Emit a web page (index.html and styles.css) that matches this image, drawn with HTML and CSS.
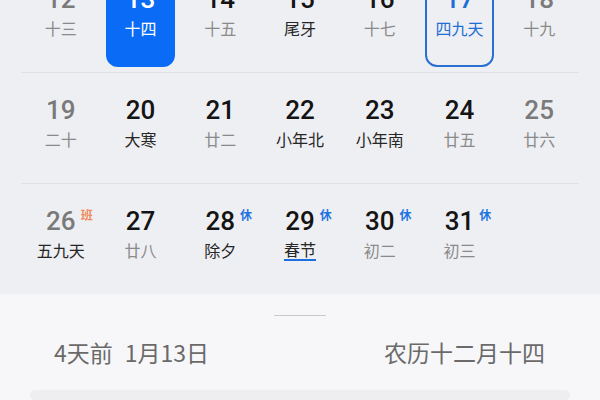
FILE: index.html
```html
<!DOCTYPE html>
<html lang="zh">
<head>
<meta charset="utf-8">
<link rel="stylesheet" href="styles.css">
</head>
<body>
<div class="cal">
  <div class="row">
    <div class="cell"><span class="num muted">12</span><span class="lunar">十三</span></div>
    <div class="cell selected"><span class="num">13</span><span class="lunar">十四</span></div>
    <div class="cell"><span class="num">14</span><span class="lunar">十五</span></div>
    <div class="cell"><span class="num">15</span><span class="lunar dark">尾牙</span></div>
    <div class="cell"><span class="num">16</span><span class="lunar">十七</span></div>
    <div class="cell today"><span class="num">17</span><span class="lunar">四九天</span></div>
    <div class="cell"><span class="num muted">18</span><span class="lunar">十九</span></div>
  </div>
  <div class="row">
    <div class="cell"><span class="num muted">19</span><span class="lunar">二十</span></div>
    <div class="cell"><span class="num">20</span><span class="lunar dark">大寒</span></div>
    <div class="cell"><span class="num">21</span><span class="lunar">廿二</span></div>
    <div class="cell"><span class="num">22</span><span class="lunar dark">小年北</span></div>
    <div class="cell"><span class="num">23</span><span class="lunar dark">小年南</span></div>
    <div class="cell"><span class="num">24</span><span class="lunar">廿五</span></div>
    <div class="cell"><span class="num muted">25</span><span class="lunar">廿六</span></div>
  </div>
  <div class="row last">
    <div class="cell"><span class="num muted">26<span class="badge work">班</span></span><span class="lunar dark">五九天</span></div>
    <div class="cell"><span class="num">27</span><span class="lunar">廿八</span></div>
    <div class="cell"><span class="num">28<span class="badge rest">休</span></span><span class="lunar dark">除夕</span></div>
    <div class="cell"><span class="num">29<span class="badge rest">休</span></span><span class="lunar dark festival">春节</span></div>
    <div class="cell"><span class="num">30<span class="badge rest">休</span></span><span class="lunar">初二</span></div>
    <div class="cell"><span class="num">31<span class="badge rest">休</span></span><span class="lunar">初三</span></div>
    <div class="cell"></div>
  </div>
</div>
<div class="panel">
  <div class="handle"></div>
  <div class="info">
    <div class="when"><span>4天前</span><span>1月13日</span></div>
    <div class="lunar-date">农历十二月十四</div>
  </div>
  <div class="card"></div>
</div>
</body>
</html>
```

FILE: styles.css
```css
* { box-sizing: border-box; }
html, body {
  margin: 0;
  padding: 0;
  width: 600px;
  height: 400px;
  overflow: hidden;
  background: #eeeff3;
  font-family: "Noto Sans CJK SC", "Noto Sans", sans-serif;
}
.cal {
  margin-top: -38px;
  padding: 0 21px;
}
.row {
  display: grid;
  grid-template-columns: repeat(7, 1fr);
  height: 111px;
  border-bottom: 1px solid #e1e1e5;
}
.row.last {
  border-bottom: none;
  height: 110px;
}
.cell {
  margin: 5px;
  height: 100px;
  padding-top: 17px;
  display: flex;
  flex-direction: column;
  align-items: center;
  border-radius: 12px;
}
.num {
  position: relative;
  font-family: Roboto, "Noto Sans CJK SC", sans-serif;
  font-weight: 500;
  font-size: 26px;
  line-height: 30px;
  color: #141414;
}
.num.muted { color: #7a7a7a; }
.lunar {
  margin-top: 3px;
  font-size: 16px;
  line-height: 22px;
  color: #8a8a8a;
}
.lunar.dark { color: #262626; }
.festival {
  line-height: 20px;
  border-bottom: 2px solid #1d6fe0;
}
.badge {
  position: absolute;
  left: 100%;
  top: 2px;
  margin-left: 5px;
  font-family: "Noto Sans CJK SC", sans-serif;
  font-size: 12px;
  line-height: 14px;
  font-weight: 700;
  white-space: nowrap;
}
.badge.rest { color: #1f74e0; }
.badge.work { color: #f08a5d; }
.selected {
  background: #0a6cf6;
}
.selected .num, .selected .lunar { color: #ffffff; }
.today {
  border: 2px solid #2a6fd2;
  padding-top: 15px;
}
.today .num, .today .lunar { color: #1f6fd6; }
.panel {
  background: #f7f7f9;
  height: 106px;
  display: flex;
  flex-direction: column;
  align-items: center;
  padding-top: 21px;
}
.handle {
  width: 52px;
  height: 4px;
  border-radius: 2px;
  background: #c9c9cd;
}
.info {
  width: 100%;
  display: flex;
  justify-content: space-between;
  align-items: center;
  padding: 0 55px 0 54px;
  margin-top: 21px;
  font-size: 23px;
  line-height: 30px;
  color: #6a6a6a;
}
.when {
  display: flex;
  gap: 12px;
}
.card {
  margin-top: 23px;
  width: 540px;
  height: 60px;
  border-radius: 16px;
  background: #eeeef1;
}
```
